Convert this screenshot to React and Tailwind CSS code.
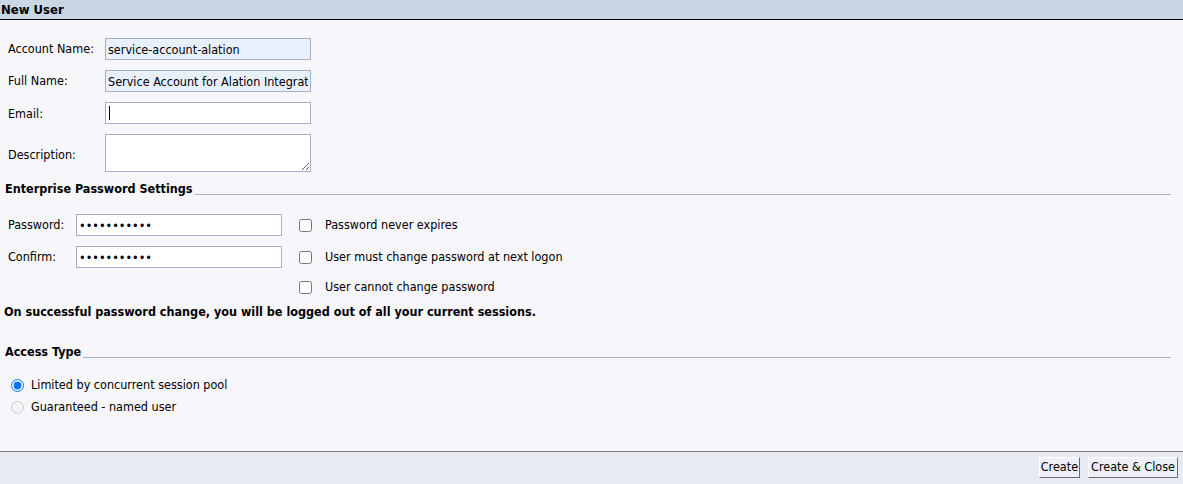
import React from "react";

const font = "font-['DejaVu_Sans_Condensed','Liberation_Sans',sans-serif]";
const inputCls =
  "block h-[22px] w-[206px] border border-[#a3b1c6] px-[2px] text-[12.5px] text-black outline-none";

const SectionTitle = ({ children }) => (
  <div className="flex h-[16px] items-center pl-[5px] pr-[12px]">
    <span className="text-[12.5px] font-bold leading-[16px]">{children}</span>
    <div className="ml-[2px] h-px flex-1 self-end mb-[2px] bg-[#a6b2c8]" />
  </div>
);

const FieldRow = ({ label, children, labelWidth = "w-[97px]", labelCls = "" }) => (
  <div className="flex items-center">
    <span className={`${labelWidth} text-[12.5px] leading-[16px] ${labelCls}`}>{label}</span>
    {children}
  </div>
);

const Check = ({ label }) => (
  <label className="flex items-center">
    <input type="checkbox" className="block h-[13px] w-[13px]" />
    <span className="ml-[13px] text-[12.5px] leading-[16px]">{label}</span>
  </label>
);

export default function App() {
  return (
    <div className={`flex h-[484px] w-[1183px] flex-col bg-[#f6f6fb] text-black ${font}`}>
      {/* header */}
      <div className="h-[20px] border-b border-black bg-[#cbd6e4] pl-[1px] text-[13px] font-bold leading-[19px]">
        New User
      </div>

      <div className="flex-1">
        {/* basic fields */}
        <div className="flex flex-col gap-[10px] pl-[8px] pt-[18px]">
          <FieldRow label="Account Name:">
            <input className={`${inputCls} bg-[#e8f0fe]`} defaultValue="service-account-alation" readOnly />
          </FieldRow>
          <FieldRow label="Full Name:">
            <input className={`${inputCls} bg-[#e8f0fe]`} defaultValue="Service Account for Alation Integration" readOnly />
          </FieldRow>
          <FieldRow label="Email:" labelCls="pt-[1px]">
            <div className="relative">
              <input className={`${inputCls} bg-white`} readOnly />
              <span className="absolute left-[4px] top-[4px] h-[14px] w-px bg-black" />
            </div>
          </FieldRow>
          <FieldRow label="Description:" labelCls="pt-[4px]">
            <textarea className="block h-[38px] w-[206px] resize border border-[#a3b1c6] bg-white text-[12.5px] outline-none" readOnly />
          </FieldRow>
        </div>

        <div className="mt-[9px]">
          <SectionTitle>Enterprise Password Settings</SectionTitle>
        </div>

        {/* password */}
        <div className="mt-[17px] flex pl-[8px]">
          <div className="flex flex-col gap-[10px]">
            <FieldRow label="Password:" labelWidth="w-[68px]">
              <input type="password" className={`${inputCls} bg-white text-[10px]`} defaultValue="aaaaaaaaaaa" readOnly />
            </FieldRow>
            <FieldRow label="Confirm:" labelWidth="w-[68px]">
              <input type="password" className={`${inputCls} bg-white text-[10px]`} defaultValue="aaaaaaaaaaa" readOnly />
            </FieldRow>
          </div>
          <div className="ml-[17px] flex flex-col">
            <div className="flex h-[22px] items-center"><Check label="Password never expires" /></div>
            <div className="mt-[10px] flex h-[22px] items-center"><Check label="User must change password at next logon" /></div>
            <div className="mt-[10px] flex h-[18px] items-center"><Check label="User cannot change password" /></div>
          </div>
        </div>

        <p className="mt-[8px] pl-[4px] text-[12.5px] font-bold leading-[15px]">
          On successful password change, you will be logged out of all your current sessions.
        </p>

        <div className="mt-[25px]">
          <SectionTitle>Access Type</SectionTitle>
        </div>

        <div className="mt-[14px] flex flex-col pl-[11px]">
          <label className="flex h-[22px] items-center">
            <input type="radio" name="access" defaultChecked className="block h-[13px] w-[13px]" />
            <span className="ml-[7px] text-[12.5px] leading-[16px]">Limited by concurrent session pool</span>
          </label>
          <label className="flex h-[22px] items-center">
            <input type="radio" name="access" disabled className="block h-[13px] w-[13px]" />
            <span className="ml-[7px] text-[12.5px] leading-[16px]">Guaranteed - named user</span>
          </label>
        </div>
      </div>

      {/* footer */}
      <div className="flex h-[33px] items-center justify-end gap-[8px] border-t border-[#7f7f7f] bg-[#e8ebf4] pr-[5px] pb-[1px]">
        <button className="h-[21px] border border-t-white border-l-white border-r-[#6b6b6b] border-b-[#6b6b6b] bg-[#eef0f5] px-[1px] text-[12.5px] leading-none">
          Create
        </button>
        <button className="h-[21px] border border-t-white border-l-white border-r-[#6b6b6b] border-b-[#6b6b6b] bg-[#eef0f5] px-[2px] text-[12.5px] leading-none">
          Create &amp; Close
        </button>
      </div>
    </div>
  );
}
